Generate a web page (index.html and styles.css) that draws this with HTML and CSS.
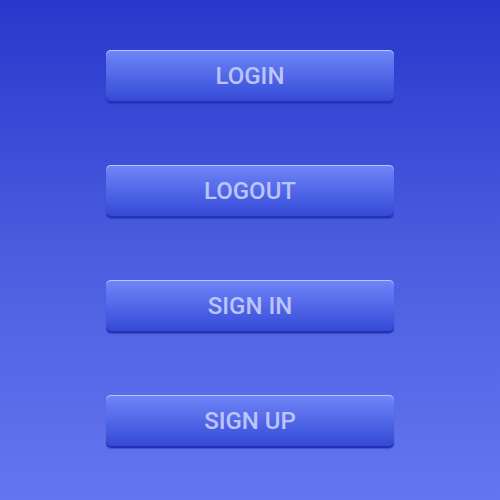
FILE: index.html
```html
<!DOCTYPE html>
<html lang="en">
<head>
    <meta charset="UTF-8">
    <meta name="viewport" content="width=device-width, initial-scale=1.0">
    <title>Buttons</title>
    <link rel="stylesheet" href="styles.css">
</head>
<body>
    <div class="button-list">
        <button class="blue-button">LOGIN</button>
        <button class="blue-button">LOGOUT</button>
        <button class="blue-button">SIGN IN</button>
        <button class="blue-button">SIGN UP</button>
    </div>
</body>
</html>
```

FILE: styles.css
```css
body {
    margin: 0;
    width: 500px;
    height: 500px;
    background: linear-gradient(to bottom, #2838cc 0%, #4a5ddf 50%, #6476ef 100%);
    font-family: 'Roboto', 'Liberation Sans', sans-serif;
}

.button-list {
    display: flex;
    flex-direction: column;
    align-items: center;
    gap: 62px;
    padding-top: 50px;
}

/* Glossy blue button */
.blue-button {
    width: 288px;
    height: 53px;
    padding: 0 0 1px;
    border: none;
    border-radius: 5px;
    background: linear-gradient(to bottom, #7086f8 0%, #5a70ec 35%, #4157de 75%, #3446d2 100%);
    box-shadow: inset 0 1px 0 rgba(190, 205, 255, 0.9),
                inset 0 -2px 0 rgba(30, 40, 170, 0.7),
                0 1px 1px rgba(20, 30, 140, 0.35);
    color: #bcc5fb;
    font-family: 'Roboto', 'Liberation Sans', sans-serif;
    font-size: 24px;
    font-weight: 500;
    cursor: pointer;
}
```
